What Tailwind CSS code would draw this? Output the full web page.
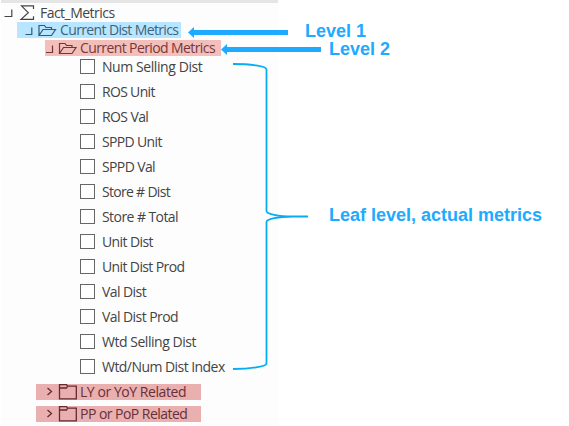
<!DOCTYPE html>
<html lang="en">
<head>
<meta charset="utf-8">
<title>Fact_Metrics</title>
<script src="https://cdn.jsdelivr.net/npm/@tailwindcss/browser@4"></script>
</head>
<body class="bg-white">
<main class="relative h-[426px] w-[569px] overflow-hidden bg-white font-['Open_Sans','Noto_Sans',sans-serif] text-[14px] leading-4 text-[#444] whitespace-nowrap">
  <section class="ml-px flex h-[426px] w-[277px] flex-col items-start border-t-3 border-[#e5e5e5] bg-[#fdfdfd]">
    <div class="flex h-[19px] items-center pl-[2px]">
      <svg class="h-[19px] w-[37px]" viewBox="3 3 37 19" fill="none" stroke="#444" stroke-width="1.2"><path d="M4.5 16.5h7.300V9.500"/><path d="M33.5 9V5.8H21.5L28.3 12.7L21 19.4H33.5V16.2"/></svg>
      <span class="tracking-[-0.53px]">Fact_Metrics</span>
    </div>
    <div class="ml-4 flex h-4 w-[164px] items-center bg-[#b8e5ff] text-[#3c647e]">
      <svg class="h-4 w-[43px] shrink-0" viewBox="17 22 43 16" fill="none" stroke="#315b73" stroke-width="1.2"><path d="M25.500 34.500h6.300V27.500"/><path d="M39 35.500V25.500H44.500L46 27.500H51.500V29.500M39 35.500L43 29.500H55.500L51.500 35.500Z"/></svg>
      <span class="tracking-[-0.63px]">Current Dist Metrics</span>
    </div>
    <div class="mt-0.5 ml-11 flex h-4 w-[176px] items-center bg-[#f3bfbb] text-[#79373a]">
      <svg class="h-4 w-[35px] shrink-0" viewBox="45 40 35 16" fill="none" stroke="#753438" stroke-width="1.2"><path d="M46 52.500h6.500V45.500"/><path d="M59.500 53.500V43.500H65L66.500 45.500H72V47.500M59.500 53.500L63.500 47.500H76L72 53.500Z"/></svg>
      <span class="tracking-[-0.6px]">Current Period Metrics</span>
    </div>
    <ul class="-mt-0.5 ml-[79px] flex flex-col">
      <li class="flex h-[25px] items-center gap-[7px]"><i class="size-[15px] border border-[#666] bg-white"></i><span class="tracking-[-0.42px]">Num Selling Dist</span></li>
      <li class="flex h-[25px] items-center gap-[7px]"><i class="size-[15px] border border-[#666] bg-white"></i><span class="tracking-[-0.68px]">ROS Unit</span></li>
      <li class="flex h-[25px] items-center gap-[7px]"><i class="size-[15px] border border-[#666] bg-white"></i><span class="tracking-[-0.6px]">ROS Val</span></li>
      <li class="flex h-[25px] items-center gap-[7px]"><i class="size-[15px] border border-[#666] bg-white"></i><span class="tracking-[-0.65px]">SPPD Unit</span></li>
      <li class="flex h-[25px] items-center gap-[7px]"><i class="size-[15px] border border-[#666] bg-white"></i><span class="tracking-[-0.62px]">SPPD Val</span></li>
      <li class="flex h-[25px] items-center gap-[7px]"><i class="size-[15px] border border-[#666] bg-white"></i><span class="tracking-[-0.7px]">Store # Dist</span></li>
      <li class="flex h-[25px] items-center gap-[7px]"><i class="size-[15px] border border-[#666] bg-white"></i><span class="tracking-[-0.57px]">Store # Total</span></li>
      <li class="flex h-[25px] items-center gap-[7px]"><i class="size-[15px] border border-[#666] bg-white"></i><span class="tracking-[-0.6px]">Unit Dist</span></li>
      <li class="flex h-[25px] items-center gap-[7px]"><i class="size-[15px] border border-[#666] bg-white"></i><span class="tracking-[-0.62px]">Unit Dist Prod</span></li>
      <li class="flex h-[25px] items-center gap-[7px]"><i class="size-[15px] border border-[#666] bg-white"></i><span class="tracking-[-0.57px]">Val Dist</span></li>
      <li class="flex h-[25px] items-center gap-[7px]"><i class="size-[15px] border border-[#666] bg-white"></i><span class="tracking-[-0.57px]">Val Dist Prod</span></li>
      <li class="flex h-[25px] items-center gap-[7px]"><i class="size-[15px] border border-[#666] bg-white"></i><span class="tracking-[-0.47px]">Wtd Selling Dist</span></li>
      <li class="flex h-[25px] items-center gap-[7px]"><i class="size-[15px] border border-[#666] bg-white"></i><span class="tracking-[-0.55px]">Wtd/Num Dist Index</span></li>
    </ul>
    <div class="mt-[5px] ml-[35px] flex h-4 w-[165px] items-center bg-[#eab0b0] text-[#672f38]">
      <svg class="h-4 w-[44px] shrink-0" viewBox="36 384 44 16" fill="none" stroke="#642a32" stroke-width="1.3"><path d="M47.500 388L51.500 391.500L47.500 395"/><path d="M59.500 398.800V384.700H66.500L67.500 386.200H76.300V398.800ZM59.500 388H66.500L67.500 386.200"/></svg>
      <span class="tracking-[-0.44px]">LY or YoY Related</span>
    </div>
    <div class="mt-1.5 ml-[35px] flex h-4 w-[165px] items-center bg-[#eab0b0] text-[#672f38]">
      <svg class="h-4 w-[44px] shrink-0" viewBox="36 384 44 16" fill="none" stroke="#642a32" stroke-width="1.3"><path d="M47.500 388L51.500 391.500L47.500 395"/><path d="M59.500 398.800V384.700H66.500L67.500 386.200H76.300V398.800ZM59.500 388H66.500L67.500 386.200"/></svg>
      <span class="tracking-[-0.53px]">PP or PoP Related</span>
    </div>
  </section>
  <svg class="absolute inset-0 h-[426px] w-[569px]" viewBox="0 0 569 426">
    <g fill="#1eaaff"><path d="M188 32.500L194 27V30H288V35H194V38Z"/><path d="M221 49.500L227 44V47H321V52H227V55Z"/></g>
    <path d="M233 64C250 64 266.500 66 266.500 69.500V211C266.500 214 278 216.500 293 216.500H308M293 216.500C278 216.500 266.500 219 266.500 222V363.500C266.500 366.500 250 369 233 369" fill="none" stroke="#05aef3" stroke-width="1.8"/>
  </svg>
  <div class="font-['Liberation_Sans',Arial,sans-serif] text-[18px] leading-6 font-bold text-[#1eaaff]">
    <p class="absolute top-[19px] left-[305px]">Level 1</p>
    <p class="absolute top-[37px] left-[329px]">Level 2</p>
    <p class="absolute top-[203px] left-[329px]">Leaf level, actual metrics</p>
  </div>
</main>
</body>
</html>
